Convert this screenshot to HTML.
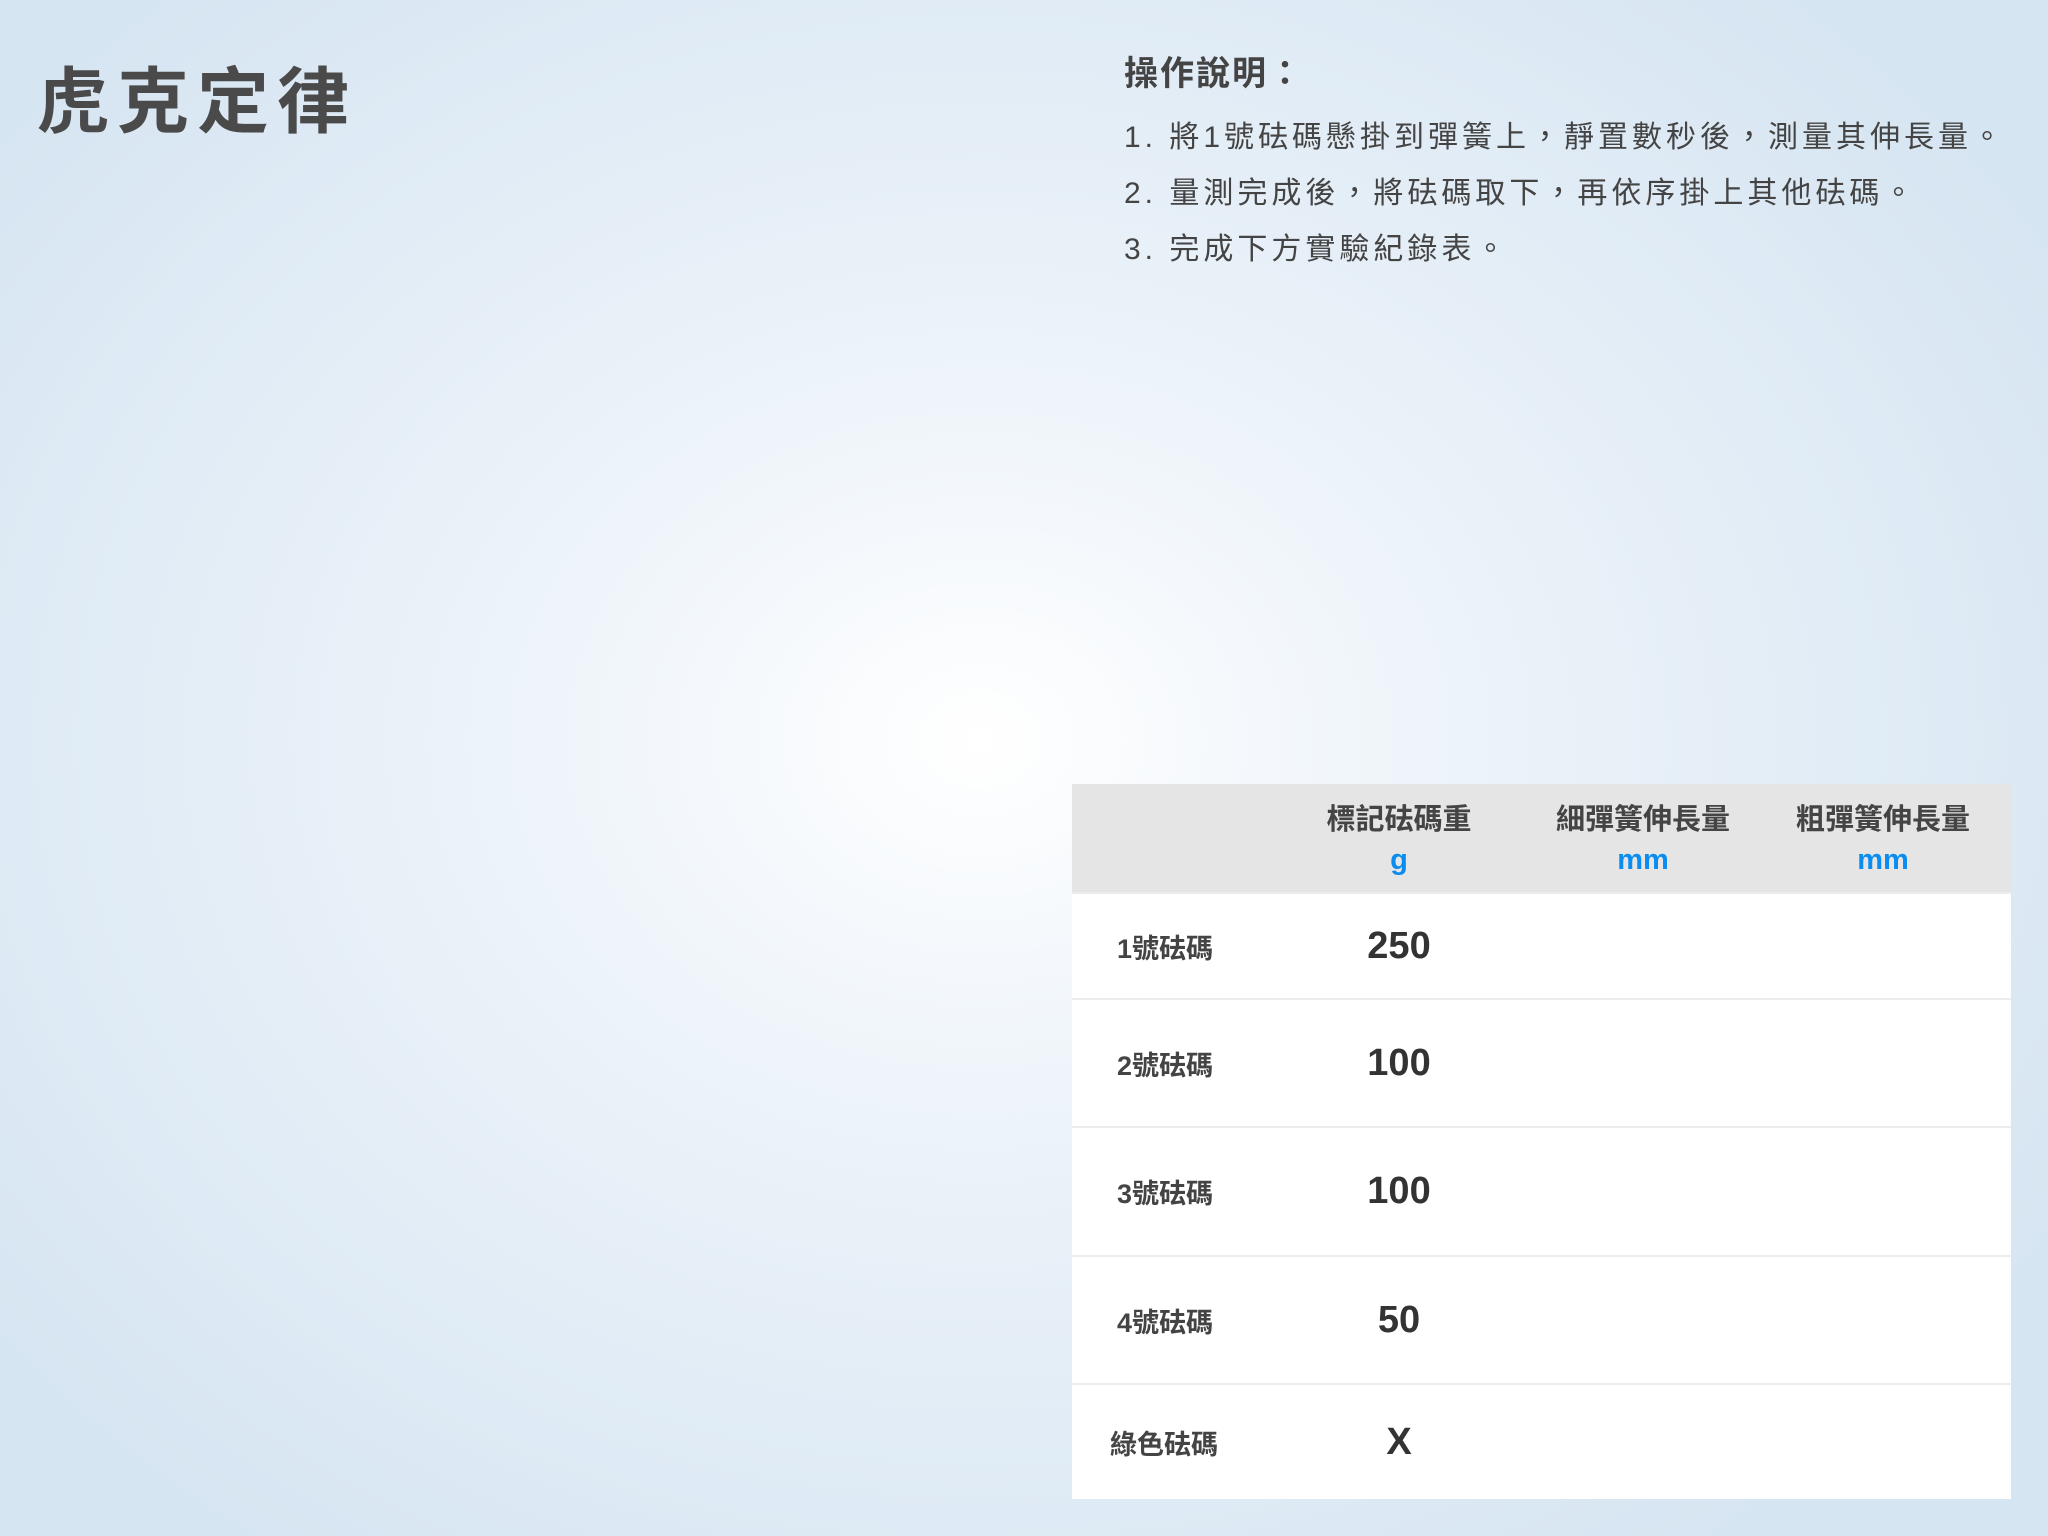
<!DOCTYPE html>
<html><head><meta charset="utf-8"><style>
html,body{margin:0;padding:0}
body{width:2048px;height:1536px;position:relative;overflow:hidden;
background:radial-gradient(ellipse 1250px 1000px at 980px 740px,#ffffff 0%,#eef4fa 35%,#d6e5f2 100%);
font-family:"Liberation Sans","Noto Sans CJK TC",sans-serif;color:#444}
.title{position:absolute;left:37px;top:58px;font-size:72px;font-weight:bold;letter-spacing:8px;color:#4a4a4a;line-height:90px}
.inst{position:absolute;left:1124px;top:46px;font-size:30px;letter-spacing:4px;color:#444;line-height:56px}
.inst b{display:block;font-size:34px;margin-bottom:8px;letter-spacing:2px}
table{position:absolute;left:1072px;top:784px;width:939px;border-collapse:collapse;background:#fff}
td,th{text-align:center;padding:0}
thead tr{background:#e5e5e5;height:109px}
th{font-size:29px;font-weight:bold;color:#444;line-height:40px;vertical-align:middle;padding-top:4px}
th span{color:#0a8cf0;display:block}
tbody tr{border-top:2px solid #ececec}
td.l{font-size:27px;font-weight:bold;color:#444;text-align:left;padding-left:45px}
td.n{font-size:38px;font-weight:bold;color:#333}
</style></head><body>
<div class="title">虎克定律</div>
<div class="inst"><b>操作說明：</b>1. 將1號砝碼懸掛到彈簧上，靜置數秒後，測量其伸長量。<br>2. 量測完成後，將砝碼取下，再依序掛上其他砝碼。<br>3. 完成下方實驗紀錄表。</div>
<table>
<colgroup><col style="width:195px"><col style="width:264px"><col style="width:224px"><col style="width:256px"></colgroup>
<thead><tr><th></th><th>標記砝碼重<span>g</span></th><th>細彈簧伸長量<span>mm</span></th><th>粗彈簧伸長量<span>mm</span></th></tr></thead>
<tbody>
<tr style="height:106px"><td class="l">1號砝碼</td><td class="n">250</td><td></td><td></td></tr>
<tr style="height:128px"><td class="l">2號砝碼</td><td class="n">100</td><td></td><td></td></tr>
<tr style="height:129px"><td class="l">3號砝碼</td><td class="n">100</td><td></td><td></td></tr>
<tr style="height:128px"><td class="l">4號砝碼</td><td class="n">50</td><td></td><td></td></tr>
<tr style="height:115px"><td class="l" style="padding-left:38px">綠色砝碼</td><td class="n">X</td><td></td><td></td></tr>
</tbody></table>
</body></html>
